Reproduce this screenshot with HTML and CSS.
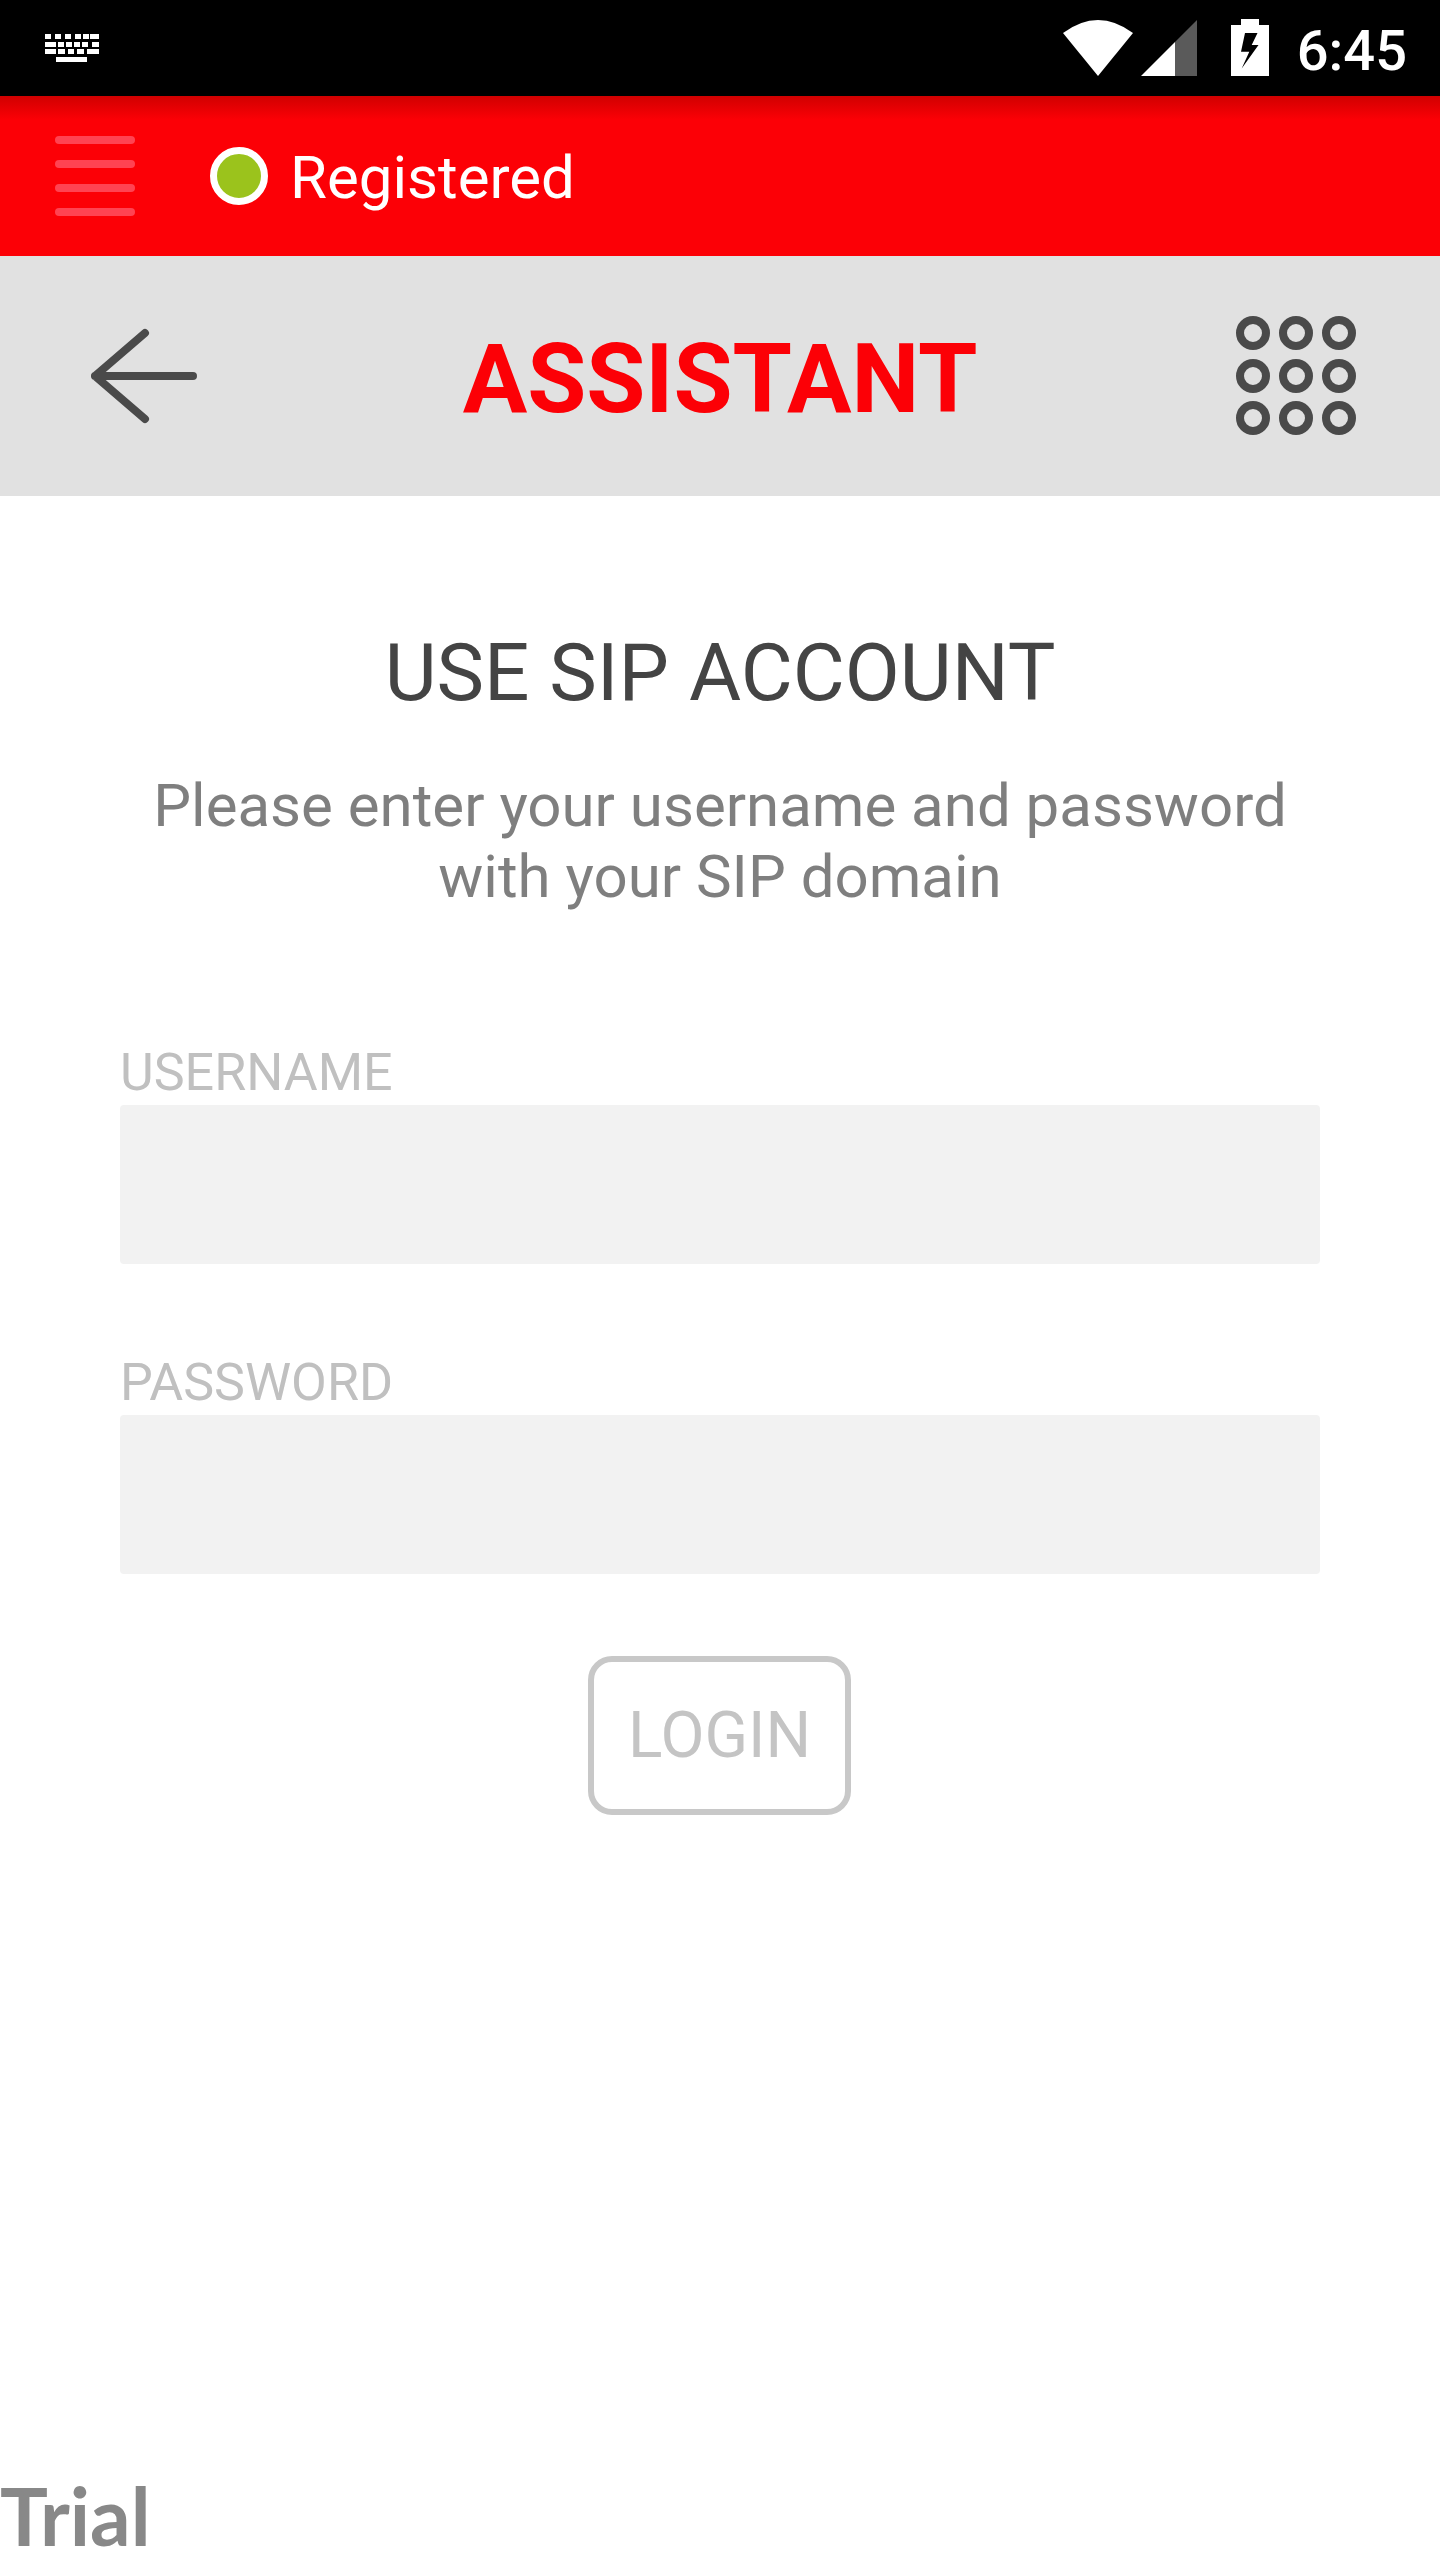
FILE: index.html
```html
<!DOCTYPE html>
<html lang="en">
<head>
    <meta charset="UTF-8">
    <meta name="viewport" content="width=device-width, initial-scale=1.0">
    <title>Assistant</title>
    <link rel="stylesheet" href="styles.css">
</head>
<body>
    <div class="status-bar">
        <svg class="keyboard" width="54" height="28" viewBox="0 0 54 28" fill="#fff">
            <rect x="0" y="0" width="6" height="5"/><rect x="10" y="0" width="6" height="5"/><rect x="20" y="0" width="6" height="5"/>
            <rect x="30" y="0" width="6" height="5"/><rect x="38" y="0" width="6" height="5"/><rect x="45" y="0" width="9" height="5"/>
            <rect x="0" y="8" width="11" height="5"/><rect x="13" y="8" width="6" height="5"/><rect x="21" y="8" width="6" height="5"/>
            <rect x="29" y="8" width="6" height="5"/><rect x="37" y="8" width="6" height="5"/><rect x="47" y="8" width="7" height="5"/>
            <rect x="0" y="15" width="11" height="5"/><rect x="13" y="15" width="7" height="5"/><rect x="23" y="15" width="6" height="5"/>
            <rect x="32" y="15" width="7" height="5"/><rect x="42" y="15" width="12" height="5"/>
            <rect x="11" y="23" width="31" height="5"/>
        </svg>
        <div class="status-icons">
            <svg class="wifi" width="70" height="56" viewBox="0 0 70 56" fill="#fff">
                <path d="M0 13 Q35 -13 70 13 L35 56 Z"/>
            </svg>
            <svg class="signal" width="56" height="56" viewBox="0 0 56 56">
                <path d="M56 0 V56 H34 V22 Z" fill="#5a5a5a"/>
                <path d="M34 22 V56 H0 Z" fill="#fff"/>
            </svg>
            <svg class="battery" width="38" height="57" viewBox="0 0 38 57">
                <path d="M10 0 H28 V6 H38 V57 H0 V6 H10 Z" fill="#fff"/>
                <path d="M14 14 H26.5 L20.7 26 H27.5 L10.7 49.5 L18.3 32.7 H10 Z" fill="#000"/>
            </svg>
            <span class="clock">6:45</span>
        </div>
    </div>

    <div class="reg-bar">
        <div class="menu-btn">
            <span></span>
            <span></span>
            <span></span>
            <span></span>
        </div>
        <span class="led"></span>
        <span class="reg-text">Registered</span>
    </div>

    <div class="top-bar">
        <svg class="back" width="110" height="96" viewBox="0 0 110 96" fill="none" stroke="#4a4a4a" stroke-width="8" stroke-linecap="round" stroke-linejoin="round">
            <path d="M54 5 L4 48 L54 91 M4 48 H102"/>
        </svg>
        <h1 class="top-title">ASSISTANT</h1>
        <svg class="dialer" width="122" height="122" viewBox="0 0 122 122" fill="none" stroke="#4a4a4a" stroke-width="8">
            <circle cx="18" cy="18" r="13"/><circle cx="61" cy="18" r="13"/><circle cx="104" cy="18" r="13"/>
            <circle cx="18" cy="61" r="13"/><circle cx="61" cy="61" r="13"/><circle cx="104" cy="61" r="13"/>
            <circle cx="18" cy="103" r="13"/><circle cx="61" cy="103" r="13"/><circle cx="104" cy="103" r="13"/>
        </svg>
    </div>

    <div class="content">
        <h2 class="heading">USE SIP ACCOUNT</h2>
        <p class="intro">Please enter your username and password<br>with your SIP domain</p>

        <div class="form">
            <label class="field-label">USERNAME</label>
            <div class="field"></div>
            <label class="field-label">PASSWORD</label>
            <div class="field"></div>
        </div>

        <button class="login">LOGIN</button>
    </div>

    <div class="trial">Trial</div>
</body>
</html>
```

FILE: styles.css
```css
*{
    box-sizing: border-box;
}

html, body{
    margin: 0;
    height: 2560px;
    overflow: hidden;
}

body{
    display: flex;
    flex-direction: column;
    background-color: #fff;
    font-family: Roboto, "Liberation Sans", sans-serif;
}

.status-bar{
    height: 96px;
    flex: none;
    display: flex;
    align-items: flex-start;
    justify-content: space-between;
    background-color: #000;
    padding: 19px 33px 0 45px;
}

.keyboard{
    margin-top: 15px;
}

.status-icons{
    display: flex;
    align-items: flex-start;
    color: #fff;
}

.wifi{
    margin-top: 1px;
    margin-right: 8px;
}

.signal{
    margin-top: 1px;
    margin-right: 34px;
}

.battery{
    margin-right: 28px;
}

.clock{
    font-size: 56px;
    font-weight: 500;
    line-height: 64px;
    margin-top: 0;
}

.reg-bar{
    height: 160px;
    flex: none;
    display: flex;
    align-items: center;
    background: linear-gradient(#d00000, #fc0006 24px);
    padding-left: 55px;
}

.menu-btn{
    width: 80px;
    display: flex;
    flex-direction: column;
    gap: 16px;
    margin-right: 75px;
}

.menu-btn span{
    height: 8px;
    border-radius: 4px;
    background-color: #ff4352;
}

.led{
    width: 58px;
    height: 58px;
    border-radius: 50%;
    border: 7px solid #fff;
    background-color: #9bc31c;
    margin-right: 22px;
}

.reg-text{
    color: #fff;
    font-size: 60px;
    margin-top: 2px;
}

.top-bar{
    height: 240px;
    flex: none;
    display: grid;
    grid-template-columns: 1fr auto 1fr;
    align-items: center;
    background-color: #e1e1e1;
    padding: 0 83px 0 91px;
}

.dialer{
    justify-self: end;
}

.top-title{
    margin: 6px 0 0;
    color: #fc0006;
    font-size: 96px;
    font-weight: bold;
    transform: translateX(-4px);
}

.content{
    display: flex;
    flex-direction: column;
    align-items: center;
}

.heading{
    margin: 133px 0 0;
    color: #444;
    font-size: 80px;
    font-weight: normal;
    line-height: 88px;
}

.intro{
    margin: 53px 0 0;
    color: #7f7f7f;
    font-size: 60px;
    line-height: 71px;
    text-align: center;
}

.form{
    width: 1200px;
    margin-top: 131px;
}

.field-label{
    display: block;
    margin-bottom: 2px;
    color: #c0c0c0;
    font-size: 52px;
    line-height: 60px;
}

.field{
    height: 159px;
    margin-bottom: 89px;
    border-radius: 4px;
    background-color: #f2f2f2;
}

.login{
    width: 263px;
    height: 159px;
    margin-top: -7px;
    margin-right: 1px;
    border: 6px solid #c8c8c8;
    border-radius: 24px;
    background-color: #fff;
    color: #c4c4c4;
    font-family: inherit;
    font-size: 64px;
}

.trial{
    margin-top: auto;
    color: #888;
    font-family: Lato, sans-serif;
    font-size: 80px;
    font-weight: 700;
    line-height: 90px;
}
```
